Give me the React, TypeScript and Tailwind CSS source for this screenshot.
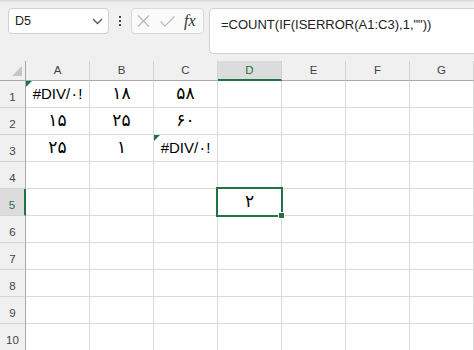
import React from "react";

const cols = ["A", "B", "C", "D", "E", "F", "G"];
const data: Record<string, string> = {
  A1: "#DIV/۰!",
  B1: "۱۸",
  C1: "۵۸",
  A2: "۱۵",
  B2: "۲۵",
  C2: "۶۰",
  A3: "۲۵",
  B3: "۱",
  C3: "#DIV/۰!",
  D5: "۲",
};
const errorCells = new Set(["A1", "C3"]);

export default function App() {
  const rows = [1, 2, 3, 4, 5, 6, 7, 8, 9, 10];
  return (
    <div
      className="w-[474px] h-[350px] overflow-hidden bg-[#f0f0f0] relative"
      style={{ fontFamily: '"Liberation Sans", "DejaVu Sans", sans-serif' }}
    >
      <div className="h-[3px] bg-gradient-to-b from-[#d6d6d6] to-[#f0f0f0]" />
      {/* toolbar */}
      <div className="h-[58px] flex items-start pt-[5px] pl-[8px]">
        <div className="w-[101px] h-[26px] bg-white border border-[#d0d0d0] rounded-[4px] flex items-center pl-[6px] pr-[5px]">
          <span className="text-[12.5px] text-[#222] leading-none flex-1">D5</span>
          <svg width="11" height="7" viewBox="0 0 11 7">
            <path d="M1 1 L5.5 5.5 L10 1" fill="none" stroke="#555" strokeWidth="1.3" />
          </svg>
        </div>
        <div className="w-[22px] h-[26px] flex flex-col items-center justify-center gap-[2px]">
          <div className="w-[2px] h-[2px] bg-[#444]" />
          <div className="w-[2px] h-[2px] bg-[#444]" />
          <div className="w-[2px] h-[2px] bg-[#444]" />
        </div>
        <div className="w-[73px] h-[26px] bg-[#fafafa] border border-[#d8d8d8] rounded-[4px] flex items-center pl-[5px]">
          <svg width="13" height="12" viewBox="0 0 13 12" className="mr-[10px]">
            <path d="M1 0.5 L12 11.5 M12 0.5 L1 11.5" stroke="#b8b8b8" strokeWidth="1.1" fill="none" />
          </svg>
          <svg width="15" height="11" viewBox="0 0 15 11" className="mr-[9px]">
            <path d="M0.5 5.5 L5 10 L14.5 0.5" stroke="#b8b8b8" strokeWidth="1.1" fill="none" />
          </svg>
          <span
            className="text-[16px] italic text-[#333] leading-none"
            style={{ fontFamily: '"Liberation Serif", "DejaVu Serif", serif' }}
          >
            fx
          </span>
        </div>
        <div className="ml-[5px] flex-1 h-[46px] bg-white border border-[#d0d0d0] rounded-l-[5px] border-r-0 pl-[11px] pt-[7px] leading-none">
          <span className="text-[13px] text-[#222] leading-none whitespace-nowrap">
            =COUNT(IF(ISERROR(A1:C3),1,""))
          </span>
        </div>
      </div>
      {/* grid */}
      <div className="grid grid-cols-[26px_repeat(7,64px)] grid-rows-[20px_repeat(10,27px)]">
        {/* corner */}
        <div className="border-r border-b border-[#a8a8a8] bg-[#f0f0f0] relative">
          <svg width="11" height="11" viewBox="0 0 11 11" className="absolute left-[12px] top-[5px]">
            <polygon points="10,0 10,10 0,10" fill="#c6c6c6" />
          </svg>
        </div>
        {cols.map((c) => (
          <div
            key={c}
            className={
              c === "D"
                ? "bg-[#dcdcdc] border-r border-[#d0d0d0] border-b-2 border-b-[#217346] flex items-center justify-center text-[11.5px] text-[#217346] leading-none"
                : "bg-[#f0f0f0] border-r border-[#d4d4d4] border-b border-b-[#a8a8a8] flex items-center justify-center text-[11.5px] text-[#444] leading-none"
            }
          >
            <span className={c === "D" ? "pt-[1px]" : ""}>{c}</span>
          </div>
        ))}
        {rows.map((r) => (
          <React.Fragment key={r}>
            <div
              className={
                r === 5
                  ? "bg-[#dcdcdc] border-r-2 border-r-[#217346] border-b border-b-[#d4d4d4] flex items-center justify-center pt-[7px] text-[11.5px] text-[#217346] leading-none"
                  : "bg-[#f0f0f0] border-r border-r-[#a8a8a8] border-b border-b-[#d4d4d4] flex items-center justify-center pt-[7px] text-[11.5px] text-[#444] leading-none"
              }
            >
              {r}
            </div>
            {cols.map((c) => {
              const id = `${c}${r}`;
              const v = data[id];
              const isErr = errorCells.has(id);
              return (
                <div
                  key={id}
                  className={
                    isErr
                      ? "bg-white border-r border-b border-[#dadada] relative flex items-center justify-center pb-[2px] text-[15px] text-black leading-none"
                      : "bg-white border-r border-b border-[#dadada] relative flex items-center justify-center pb-[2px] text-[17px] text-black leading-none"
                  }
                >
                  {v}
                  {isErr && (
                    <svg width="6" height="6" viewBox="0 0 6 6" className="absolute left-0 top-0">
                      <polygon points="0,0 6,0 0,6" fill="#217346" />
                    </svg>
                  )}
                  {id === "D5" && (
                    <>
                      <div className="absolute z-10 left-[-2px] top-[-2px] w-[67px] h-[30px] border-2 border-[#217346]" />
                      <div className="absolute z-20 left-[60px] top-[23px] w-[7px] h-[7px] bg-[#217346] border border-white" />
                    </>
                  )}
                </div>
              );
            })}
          </React.Fragment>
        ))}
      </div>
    </div>
  );
}
